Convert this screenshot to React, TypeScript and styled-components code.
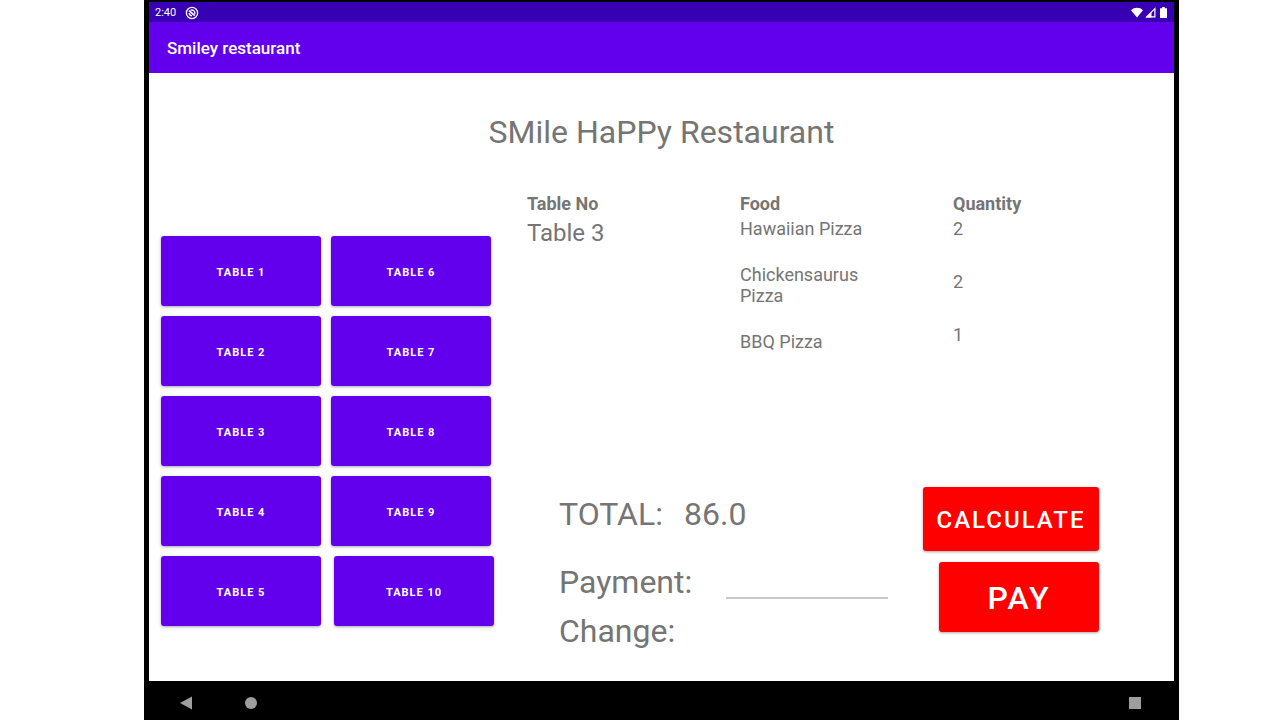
import React from "react";
import styled, { createGlobalStyle } from "styled-components";

const GlobalStyle = createGlobalStyle`
  *, *::before, *::after { box-sizing: border-box; }
  body {
    margin: 0;
    background: #ffffff;
    color: #757575;
    font-family: Roboto, "Liberation Sans", sans-serif;
  }
  button, input { font-family: inherit; }
`;

const Stage = styled.div`
  min-height: 100vh;
  display: flex;
  padding: 0 101px 0 144px;
`;

const Device = styled.div`
  flex: 1;
  display: flex;
  flex-direction: column;
  padding: 2px 5px 0;
  background: #000000;
`;

const StatusBar = styled.div`
  height: 20px;
  display: flex;
  align-items: center;
  justify-content: space-between;
  padding: 1px 7px 0 6px;
  background: #3700b3;
  color: #ffffff;
  font-size: 11px;
  line-height: 20px;
`;

const StatusGroup = styled.div<{ $gap: number }>`
  display: flex;
  align-items: center;
  gap: ${({ $gap }) => $gap}px;

  svg { display: block; }
`;

const AppBar = styled.header`
  height: 51px;
  display: flex;
  align-items: center;
  padding: 0 18px;
  background: #6200ee;
`;

const AppTitle = styled.h1`
  margin: 0;
  color: #ffffff;
  font-size: 17px;
  font-weight: 500;
  line-height: 24px;
`;

const Content = styled.main`
  flex: 1;
  display: flex;
  flex-direction: column;
  padding: 37px 12px 30px;
  background: #ffffff;
`;

const Heading = styled.h2`
  margin: 0 0 40px;
  font-size: 32px;
  font-weight: 400;
  line-height: 44px;
  text-align: center;
`;

const Columns = styled.div`
  flex: 1;
  display: flex;
  gap: 33px;
`;

const TableList = styled.nav`
  flex: none;
  width: 333px;
  display: flex;
  flex-direction: column;
  gap: 10px;
  padding-top: 42px;
`;

const TableRow = styled.div<{ $gap: number }>`
  display: flex;
  gap: ${({ $gap }) => $gap}px;
`;

const RaisedButton = styled.button`
  height: 70px;
  padding: 2px 0 0;
  border: 0;
  border-radius: 3px;
  color: #ffffff;
  font-weight: 500;
  text-transform: uppercase;
  box-shadow: 0 1px 3px rgba(0, 0, 0, 0.35);
  cursor: pointer;
`;

const TableButton = styled(RaisedButton)`
  width: 160px;
  background: #6200ee;
  font-size: 11px;
  font-weight: 700;
  letter-spacing: 1px;
`;

const ActionButton = styled(RaisedButton)<{ $large?: boolean }>`
  width: ${({ $large }) => ($large ? 160 : 176)}px;
  height: ${({ $large }) => ($large ? 70 : 64)}px;
  background: #ff0000;
  font-size: ${({ $large }) => ($large ? 32 : 24)}px;
  letter-spacing: 2px;
`;

const OrderPane = styled.section`
  flex: 1;
  display: flex;
  flex-direction: column;
  justify-content: space-between;
`;

const OrderTable = styled.table`
  width: 100%;
  table-layout: fixed;
  border-collapse: collapse;
`;

const HeadCell = styled.th`
  width: 213px;
  padding: 0 0 4px;
  font-size: 18px;
  font-weight: 700;
  line-height: 20px;
  text-align: left;

  &:last-child { width: auto; }
`;

const Cell = styled.td`
  padding: 0;
  vertical-align: top;
`;

const TableName = styled.span`
  font-size: 24px;
  line-height: 30px;
`;

const Items = styled.ul<{ $gap: number }>`
  display: flex;
  flex-direction: column;
  gap: ${({ $gap }) => $gap}px;
  max-width: 128px;
  margin: 0;
  padding: 0;
  list-style: none;
  font-size: 18px;
  line-height: 21px;
`;

const Summary = styled.form`
  display: flex;
  justify-content: space-between;
  padding: 0 63px 0 32px;
`;

const Amounts = styled.div`
  display: flex;
  flex-direction: column;
  padding-top: 7px;
  font-size: 32px;
  line-height: 40px;
`;

const AmountRow = styled.div<{ $space?: number }>`
  display: flex;
  margin-bottom: ${({ $space = 0 }) => $space}px;
`;

const TotalValue = styled.output`
  margin-left: 21px;
`;

const PaymentInput = styled.input`
  width: 162px;
  height: 37px;
  margin-left: 34px;
  padding: 0;
  border: 0;
  border-bottom: 2px solid #c8c8c8;
  outline: 0;
  background: transparent;
  color: #212121;
  font-size: 24px;
`;

const Actions = styled.div`
  display: flex;
  flex-direction: column;
  align-items: flex-end;
  gap: 11px;
`;

const NavBar = styled.footer`
  height: 39px;
  display: flex;
  align-items: center;
  justify-content: space-between;
  padding: 4px 32px 0 30px;
`;

const NavGroup = styled.div`
  display: flex;
  gap: 51px;
`;

const NavButton = styled.button`
  display: block;
  padding: 0;
  border: 0;
  background: transparent;
  cursor: pointer;

  svg { display: block; }
`;

const DebugIcon = () => (
  <svg width="14" height="14" viewBox="0 0 14 14" fill="none" stroke="#ffffff" aria-hidden="true">
    <circle cx="7" cy="7" r="5.6" strokeWidth="1.3" />
    <path d="M4 4.6 9.800 9.600" strokeWidth="1.8" />
    <path d="M5.600 4.200a3.200 3.200 0 0 1 4.300 3.600M4.200 7A3 3 0 0 0 7 9.800" strokeWidth="1.400" />
  </svg>
);

const WifiIcon = () => (
  <svg width="12" height="11" viewBox="0 0 12 11" fill="#ffffff" aria-hidden="true">
    <path d="M6 10.500 0 3.200C3.200-.1 8.800-.1 12 3.200Z" />
  </svg>
);

const SignalIcon = () => (
  <svg width="13" height="11" viewBox="0 0 13 11" aria-hidden="true">
    <path d="M1.600 9.900 9.900 1.600V9.900Z" fill="none" stroke="#ffffff" strokeWidth="1.200" />
    <path d="M1 10.500 6.500 5V10.500Z" fill="#ffffff" />
  </svg>
);

const BatteryIcon = () => (
  <svg width="7" height="11" viewBox="0 0 7 11" fill="#ffffff" aria-hidden="true">
    <path d="M2.200 0h2.600v1.200H7V11H0V1.200h2.200Z" />
  </svg>
);

const tableRows = [1, 2, 3, 4, 5].map((n) => [n, n + 5]);

const order = {
  table: "Table 3",
  items: [
    { food: "Hawaiian Pizza", quantity: 2 },
    { food: "Chickensaurus Pizza", quantity: 2 },
    { food: "BBQ Pizza", quantity: 1 },
  ],
};

export default function App() {
  return (
    <>
      <GlobalStyle />
      <Stage>
        <Device>
          <StatusBar>
            <StatusGroup $gap={9}>
              <span>2:40</span>
              <DebugIcon />
            </StatusGroup>
            <StatusGroup $gap={2}>
              <WifiIcon />
              <SignalIcon />
              <BatteryIcon />
            </StatusGroup>
          </StatusBar>
          <AppBar>
            <AppTitle>Smiley restaurant</AppTitle>
          </AppBar>
          <Content>
            <Heading>SMile HaPPy Restaurant</Heading>
            <Columns>
              <TableList aria-label="Tables">
                {tableRows.map((row) => (
                  <TableRow key={row[0]} $gap={row[1] === 10 ? 13 : 10}>
                    {row.map((n) => (
                      <TableButton key={n} type="button">Table {n}</TableButton>
                    ))}
                  </TableRow>
                ))}
              </TableList>
              <OrderPane>
                <OrderTable>
                  <thead>
                    <tr>
                      <HeadCell scope="col">Table No</HeadCell>
                      <HeadCell scope="col">Food</HeadCell>
                      <HeadCell scope="col">Quantity</HeadCell>
                    </tr>
                  </thead>
                  <tbody>
                    <tr>
                      <Cell><TableName>{order.table}</TableName></Cell>
                      <Cell>
                        <Items $gap={25}>
                          {order.items.map((item) => <li key={item.food}>{item.food}</li>)}
                        </Items>
                      </Cell>
                      <Cell>
                        <Items $gap={32}>
                          {order.items.map((item) => <li key={item.food}>{item.quantity}</li>)}
                        </Items>
                      </Cell>
                    </tr>
                  </tbody>
                </OrderTable>
                <Summary onSubmit={(event) => event.preventDefault()}>
                  <Amounts>
                    <AmountRow $space={28}>
                      <span>TOTAL:</span>
                      <TotalValue>86.0</TotalValue>
                    </AmountRow>
                    <AmountRow $space={9}>
                      <label htmlFor="payment">Payment:</label>
                      <PaymentInput id="payment" type="text" inputMode="decimal" />
                    </AmountRow>
                    <AmountRow>
                      <span>Change:</span>
                    </AmountRow>
                  </Amounts>
                  <Actions>
                    <ActionButton type="button">Calculate</ActionButton>
                    <ActionButton type="submit" $large>Pay</ActionButton>
                  </Actions>
                </Summary>
              </OrderPane>
            </Columns>
          </Content>
          <NavBar>
            <NavGroup>
              <NavButton type="button" aria-label="Back">
                <svg width="14" height="14" viewBox="0 0 14 14" fill="#9e9e9e">
                  <path d="M1 7 13 .5v13Z" />
                </svg>
              </NavButton>
              <NavButton type="button" aria-label="Home">
                <svg width="14" height="14" viewBox="0 0 14 14" fill="#9e9e9e">
                  <circle cx="7" cy="7" r="6" />
                </svg>
              </NavButton>
            </NavGroup>
            <NavButton type="button" aria-label="Overview">
              <svg width="14" height="14" viewBox="0 0 14 14" fill="#9e9e9e">
                <rect x="1" y="1" width="12" height="12" />
              </svg>
            </NavButton>
          </NavBar>
        </Device>
      </Stage>
    </>
  );
}
